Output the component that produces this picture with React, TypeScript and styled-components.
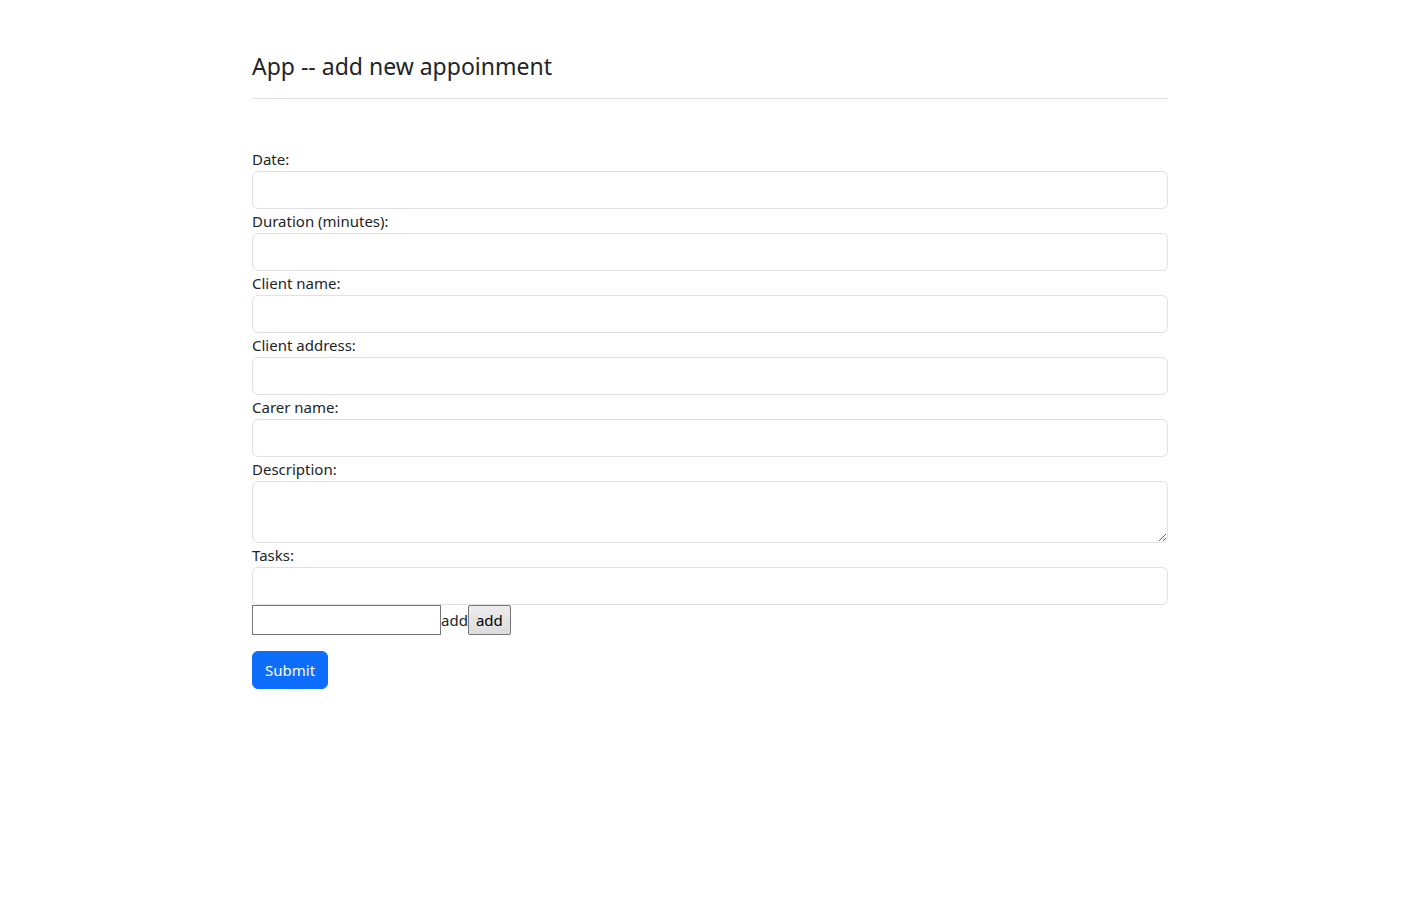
import React from "react";
import styled, { createGlobalStyle } from "styled-components";

const Global = createGlobalStyle`
  html, body { margin: 0; padding: 0; background: #fff; }
  body {
    font-family: "Segoe UI", "Noto Sans", "Liberation Sans", sans-serif;
    font-size: 16px;
    line-height: 1.5;
    color: #212529;
  }
  * { box-sizing: border-box; }
`;

const Page = styled.div`
  width: 916px;
  margin-left: 252px;
  padding-top: 52px;
`;

const Header = styled.header`
  border-bottom: 1px solid #dee2e6;
  padding-bottom: 17px;
`;

const Title = styled.h4`
  margin: 0;
  font-size: 23px;
  font-weight: 400;
  line-height: 29px;
`;

const Form = styled.form`
  margin-top: 48px;
  display: flex;
  flex-direction: column;
`;

const Label = styled.label`
  display: block;
  height: 24px;
  font-size: 15px;
  line-height: 24px;
`;

const Input = styled.input`
  display: block;
  width: 100%;
  height: 38px;
  padding: 6px 12px;
  font: inherit;
  border: 1px solid #dee2e6;
  border-radius: 6px;
  background: #fff;
`;

const TextArea = styled.textarea`
  display: block;
  width: 100%;
  height: 62px;
  padding: 6px 12px;
  font: inherit;
  border: 1px solid #dee2e6;
  border-radius: 6px;
  resize: vertical;
`;

const TaskRow = styled.div`
  display: flex;
  align-items: center;
  height: 30px;
`;

const PlainInput = styled.input`
  width: 189px;
  height: 30px;
  border: 1px solid #767676;
  padding: 1px 2px;
  font: inherit;
`;

const AddText = styled.span`
  font-size: 15px;
  line-height: 30px;
`;

const AddButton = styled.button`
  height: 30px;
  padding: 0 7px;
  font-family: inherit;
  font-size: 15px;
  color: #000;
  background: linear-gradient(#ececec, #dcdcdc);
  border: 1px solid #767676;
  border-radius: 2px;
`;

const Submit = styled.button`
  align-self: flex-start;
  margin-top: 16px;
  height: 38px;
  padding: 0 12px;
  font-family: inherit;
  font-size: 15px;
  color: #fff;
  background: #0d6efd;
  border: 1px solid #0d6efd;
  border-radius: 6px;
`;

const fields = [
  "Date:",
  "Duration (minutes):",
  "Client name:",
  "Client address:",
  "Carer name:",
];

export default function App() {
  return (
    <>
      <Global />
      <Page>
        <Header>
          <Title>App -- add new appoinment</Title>
        </Header>
        <Form onSubmit={(e) => e.preventDefault()}>
          {fields.map((f) => (
            <React.Fragment key={f}>
              <Label>{f}</Label>
              <Input type="text" />
            </React.Fragment>
          ))}
          <Label>Description:</Label>
          <TextArea rows={2} />
          <Label>Tasks:</Label>
          <Input type="text" />
          <TaskRow>
            <PlainInput type="text" />
            <AddText>add</AddText>
            <AddButton type="button">add</AddButton>
          </TaskRow>
          <Submit type="submit">Submit</Submit>
        </Form>
      </Page>
    </>
  );
}
